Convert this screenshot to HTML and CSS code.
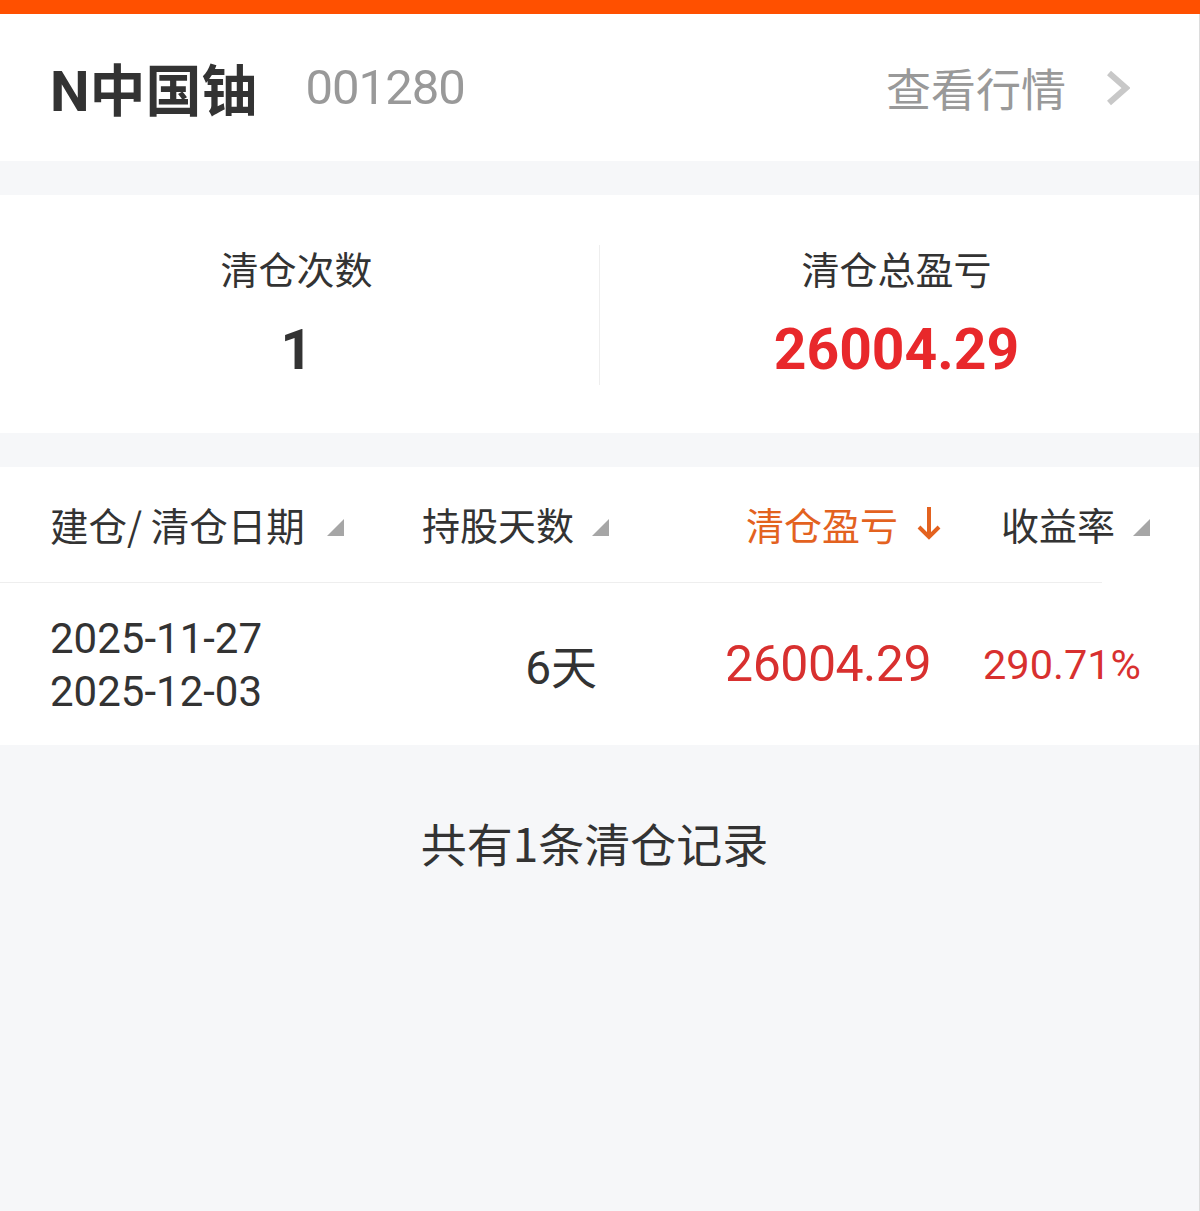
FILE: index.html
```html
<!DOCTYPE html>
<html lang="zh-CN">
<head>
<meta charset="utf-8">
<title>清仓记录</title>
<link rel="stylesheet" href="styles.css">
</head>
<body>
<div class="page">
  <div class="topbar"></div>
  <header class="head">
    <div class="stock">
      <span class="name">N中国铀</span>
      <span class="code">001280</span>
    </div>
    <a class="quote">
      <span class="quote-text">查看行情</span>
      <svg class="chev" width="24" height="36" viewBox="0 0 24 36"><polyline points="3,3 20,18 3,33" fill="none" stroke="#c8c8c8" stroke-width="6"/></svg>
    </a>
  </header>
  <section class="stats">
    <div class="stat">
      <div class="stat-label">清仓次数</div>
      <div class="stat-value">1</div>
    </div>
    <div class="vline"></div>
    <div class="stat">
      <div class="stat-label">清仓总盈亏</div>
      <div class="stat-value red">26004.29</div>
    </div>
  </section>
  <section class="table">
    <div class="thead">
      <div class="th th-left">建仓/ 清仓日期<svg class="tri" width="17" height="17" viewBox="0 0 17 17"><polygon points="17,0 17,17 0,17" fill="#a6a6a6"/></svg></div>
      <div class="th">持股天数<svg class="tri" width="17" height="17" viewBox="0 0 17 17"><polygon points="17,0 17,17 0,17" fill="#a6a6a6"/></svg></div>
      <div class="th active">清仓盈亏<svg class="arrow" width="26" height="36" viewBox="0 0 26 36"><path d="M13 2 V32 M3 22 L13 32 L23 22" fill="none" stroke="#e3621f" stroke-width="4"/></svg></div>
      <div class="th">收益率<svg class="tri" width="17" height="17" viewBox="0 0 17 17"><polygon points="17,0 17,17 0,17" fill="#a6a6a6"/></svg></div>
    </div>
    <div class="rule"></div>
    <div class="trow">
      <div class="td td-left"><div>2025-11-27</div><div>2025-12-03</div></div>
      <div class="td days">6天</div>
      <div class="td profit">26004.29</div>
      <div class="td rate">290.71%</div>
    </div>
  </section>
  <div class="footer-note">共有1条清仓记录</div>
</div>
</body>
</html>
```

FILE: styles.css
```css
html, body {
  margin: 0;
  padding: 0;
  background: #f6f7f9;
}
body {
  font-family: "Roboto", "Noto Sans CJK SC", sans-serif;
  color: #333;
}
.page {
  width: 1199px;
  min-height: 1211px;
  border-right: 1px solid #dcdcdc;
  background: #f6f7f9;
}
.topbar {
  height: 14px;
  background: #ff5000;
  margin-right: -1px;
}
.head {
  height: 147px;
  background: #fff;
  display: flex;
  align-items: center;
  justify-content: space-between;
  padding: 0 69px 0 50px;
  margin-bottom: 34px;
}
.stock {
  display: flex;
  align-items: center;
  gap: 48px;
}
.name {
  font-family: "Roboto", "Noto Sans CJK SC", sans-serif;
  font-weight: 700;
  font-size: 56px;
  color: #333;
  position: relative;
  top: -1px;
}
.code {
  font-size: 49px;
  color: #999;
  letter-spacing: -1px;
}
.quote {
  display: flex;
  align-items: center;
  gap: 40px;
}
.quote-text {
  font-family: "Noto Sans CJK SC", sans-serif;
  font-size: 45px;
  color: #999;
}
.stats {
  height: 238px;
  background: #fff;
  display: flex;
  align-items: center;
  margin-bottom: 34px;
}
.stat {
  flex: 1;
  display: flex;
  flex-direction: column;
  align-items: center;
  padding-right: 6px;
}
.stat-label {
  font-family: "Noto Sans CJK SC", sans-serif;
  font-size: 38px;
  line-height: 50px;
  color: #333;
}
.stat-value {
  font-weight: 700;
  font-size: 56px;
  line-height: 70px;
  margin-top: 22px;
  color: #333;
}
.stat-value.red {
  color: #e8282b;
  font-size: 57px;
}
.vline {
  width: 1px;
  height: 140px;
  background: #eeeeee;
  align-self: center;
  margin-top: 2px;
}
.table {
  background: #fff;
  height: 278px;
}
.thead, .trow {
  display: grid;
  grid-template-columns: 350px 209px 333px 208px;
  padding-left: 50px;
}
.thead {
  height: 115px;
  align-items: center;
}
.th {
  display: flex;
  align-items: center;
  justify-content: flex-end;
  font-family: "Noto Sans CJK SC", sans-serif;
  font-size: 38px;
  color: #333;
  gap: 18px;
  padding-bottom: 2px;
}
.th-left {
  justify-content: flex-start;
  gap: 22px;
  font-size: 38.5px;
}
.th .tri {
  margin-top: 8px;
}
.th.active {
  color: #e3621f;
}
.th .arrow {
  margin-top: -2px;
}
.rule {
  width: 1102px;
  height: 1px;
  background: #eeeeee;
}
.trow {
  height: 162px;
  align-items: center;
}
.td {
  text-align: right;
  padding-right: 11px;
  font-size: 42px;
}
.td-left {
  text-align: left;
  font-size: 42px;
  line-height: 53px;
  color: #333;
  padding-top: 2px;
}
.days {
  font-family: "Roboto", "Noto Sans CJK SC", sans-serif;
  font-size: 46px;
  padding-right: 12px;
}
.profit {
  color: #d8302f;
  font-size: 50px;
  letter-spacing: -0.5px;
}
.rate {
  color: #d8302f;
  font-size: 41.5px;
  padding-right: 9px;
}
.footer-note {
  text-align: center;
  font-family: "Noto Sans CJK SC", sans-serif;
  font-size: 46px;
  color: #333;
  padding-top: 64px;
  padding-right: 10px;
}
```
